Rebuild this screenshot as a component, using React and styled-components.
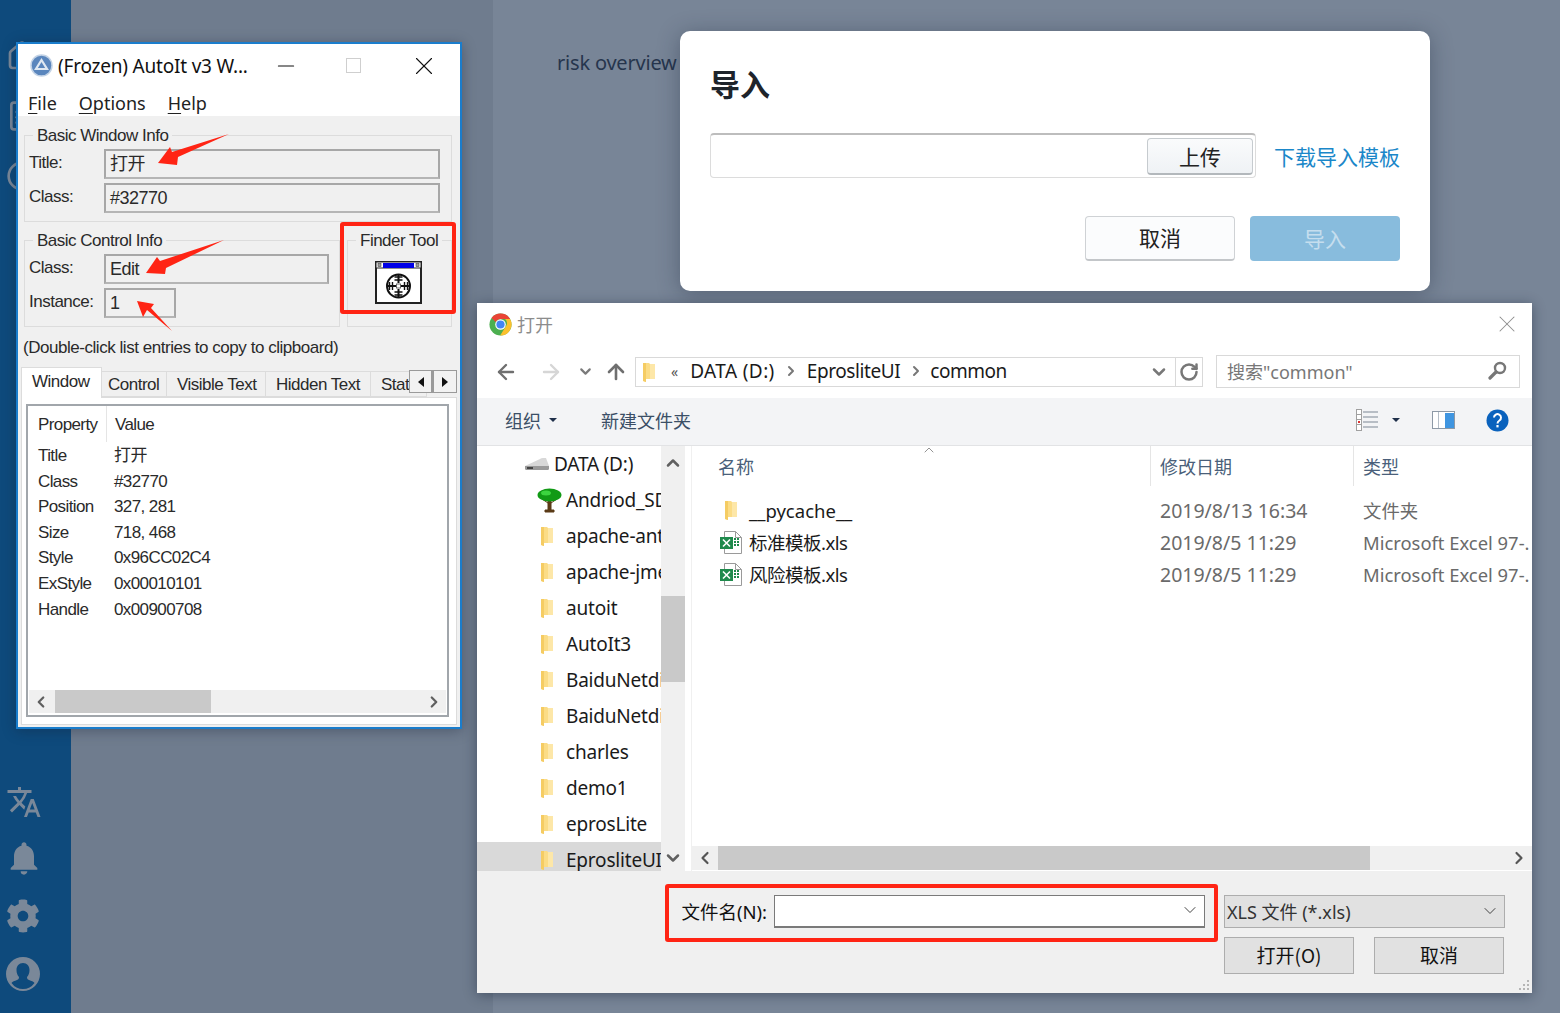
import React from 'react';
import styled, { createGlobalStyle } from 'styled-components';
import { ArrowLeft, ArrowRight, ArrowUp, ChevronDown, ChevronLeft, ChevronRight, ChevronUp, RotateCw, Home, FileText, Circle, Minus, X } from 'lucide-react';
import { MdTranslate, MdNotifications } from 'react-icons/md';
import { FaCog } from 'react-icons/fa';

const GlobalStyle = createGlobalStyle`
  html, body { margin: 0; padding: 0; }
  body { width: 1560px; height: 1013px; overflow: hidden; }
  * { box-sizing: border-box; }
  svg { flex-shrink: 0; }
`;

const winFont = `"Liberation Sans", "Noto Sans CJK SC", sans-serif`;
const uiFont = `"Noto Sans", "Noto Sans CJK SC", sans-serif`;

const Desktop = styled.div`
  position: relative;
  display: flex;
  width: 1560px;
  height: 1013px;
  overflow: hidden;
  font-family: ${uiFont};
`;

const Sidebar = styled.aside`
  width: 71px;
  flex-shrink: 0;
  background: #0e4a7c;
  color: #7a8899;
  display: flex;
  flex-direction: column;
  justify-content: space-between;
  padding: 40px 0 22px 6px;
`;

const SideGroup = styled.div`
  display: flex;
  flex-direction: column;
  gap: ${(p) => p.$gap}px;
`;

const SideIcon = styled.span`
  display: flex;
  margin-bottom: ${(p) => p.$mb}px;
  margin-left: ${(p) => p.$ml || 0}px;
`;

const Main = styled.main`
  flex: 1;
  background: linear-gradient(90deg, #6f7c8e 0, #6f7c8e 422px, #788597 422px);
  padding: 49px 0 0 486px;
`;

const PageTitle = styled.div`
  font-size: 20px;
  line-height: 28px;
  color: #26354d;
  font-family: ${uiFont};
  letter-spacing: -0.2px;
`;

/* ---- AutoIt window ---- */
const AutoWindow = styled.section`
  position: absolute;
  left: 16px;
  top: 42px;
  width: 446px;
  height: 687px;
  background: #f0f0f0;
  border: 2px solid #1a7dcc;
  box-shadow: 0 2px 12px rgba(20, 30, 50, 0.35);
  font-family: ${winFont};
  font-size: 17px;
  letter-spacing: -0.5px;
  color: #2a2a2a;
  display: flex;
  flex-direction: column;
`;

const AutoTitleBar = styled.div`
  height: 43px;
  flex-shrink: 0;
  background: #fff;
  display: flex;
  align-items: center;
  padding-left: 12px;
  font-family: ${uiFont};
  font-size: 19px;
  letter-spacing: -0.2px;
  color: #111;
`;

const AutoTitleText = styled.span`
  margin-left: 5px;
  width: 196px;
  white-space: nowrap;
`;

const CaptionButton = styled.span`
  width: ${(p) => p.$w}px;
  display: flex;
  justify-content: center;
  color: ${(p) => p.$color};
`;

const AutoMenu = styled.div`
  height: 29px;
  flex-shrink: 0;
  background: #fff;
  display: flex;
  gap: 22px;
  padding: 3px 0 0 10px;
  font-family: ${uiFont};
  font-size: 18px;
  letter-spacing: 0;
  line-height: 26px;
  color: #222;
`;

const MenuKey = styled.span`
  text-decoration: underline;
  text-underline-offset: 3px;
`;

const AutoBody = styled.div`
  flex: 1;
  display: flex;
  flex-direction: column;
  padding: 9px 3px 0;
`;

const GroupBox = styled.fieldset`
  margin: 0;
  padding: 4px 0 8px 0;
  border: 1px solid #dcdcdc;
  min-width: 0;
  display: flex;
  flex-direction: column;
  gap: 4px;
  flex: ${(p) => p.$flex || 'none'};
`;

const GroupLegend = styled.legend`
  margin-left: 8px;
  padding: 1px 4px 0;
  height: 20px;
  line-height: 20px;
`;

const GroupsColumn = styled.div`
  display: flex;
  flex-direction: column;
  gap: 8px;
  margin: 0 5px 0 3px;
`;

const GroupsRow = styled.div`
  display: flex;
  gap: 7px;
`;

const FieldRow = styled.div`
  display: flex;
  align-items: center;
  height: 30px;
  padding-left: 4px;
`;

const FieldLabel = styled.span`
  width: 75px;
  margin-top: -2px;
`;

const Field = styled.div`
  width: ${(p) => p.$w}px;
  height: 30px;
  border: 2px solid #a7a7a7;
  border-bottom-color: #b5b5b5;
  padding-left: 4px;
  line-height: 27px;
  font-size: 18px;
  background: #f0f0f0;
`;

const FinderBody = styled.div`
  height: 64px;
  display: flex;
  justify-content: center;
  align-items: flex-start;
  padding: 7px 2px 0 0;
`;

const HelpCaption = styled.div`
  height: 20px;
  line-height: 22px;
  margin: 10px 0 10px 2px;
  letter-spacing: -0.46px;
  white-space: nowrap;
`;

const TabStrip = styled.div`
  position: relative;
  height: 30px;
  flex-shrink: 0;
  display: flex;
  align-items: flex-end;
  z-index: 1;
`;

const Tab = styled.div`
  width: ${(p) => p.$w}px;
  height: ${(p) => (p.$active ? 31 : 26)}px;
  margin-bottom: ${(p) => (p.$active ? -1 : 0)}px;
  background: ${(p) => (p.$active ? '#fff' : '#f0f0f0')};
  border: 1px solid #dcdcdc;
  border-left-width: ${(p) => (p.$active ? 1 : 0)}px;
  border-bottom-width: ${(p) => (p.$active ? 0 : 1)}px;
  padding: ${(p) => (p.$active ? '3px 0 0 10px' : `2px 0 0 ${p.$pl}px`)};
  line-height: 22px;
  overflow: hidden;
  white-space: nowrap;
`;

const Spinner = styled.div`
  position: absolute;
  right: 0;
  top: 3px;
  display: flex;
`;

const SpinButton = styled.div`
  width: 24px;
  height: 23px;
  background: #f2f2f2;
  border: 1px solid #9a9a9a;
  display: flex;
  align-items: center;
  justify-content: center;
  &:first-child { border-right-width: 2px; }
`;

const TabPanel = styled.div`
  width: 436px;
  height: 328px;
  flex-shrink: 0;
  background: #fff;
  border: 1px solid #dcdcdc;
  padding: 6px 7px 7px 4px;
`;

const ListBox = styled.div`
  height: 100%;
  border: 2px solid #a1a6ab;
  display: flex;
  flex-direction: column;
  letter-spacing: -0.6px;
`;

const ListHead = styled.div`
  display: grid;
  grid-template-columns: 77px 1fr;
  height: 37px;
  line-height: 37px;
  padding-left: 10px;
  flex-shrink: 0;
`;

const HeadCell = styled.div`
  height: 36px;
  ${(p) => p.$split && 'border-right: 1px solid #e5e5e5; margin-right: 8px;'}
`;

const ListRows = styled.div`
  flex: 1;
`;

const PropRow = styled.div`
  display: grid;
  grid-template-columns: 76px 1fr;
  height: 25.6px;
  line-height: 26.5px;
  padding-left: 10px;
`;

const ListScroll = styled.div`
  height: 23px;
  margin: 0 1px 2px;
  background: #f0f0f0;
  display: flex;
  align-items: center;
  justify-content: space-between;
  position: relative;
  color: #606060;
  padding: 0 3px;
`;

const ListThumb = styled.div`
  position: absolute;
  left: 26px;
  top: 0;
  width: 156px;
  height: 100%;
  background: #c9c9c9;
`;

/* ---- web modal ---- */
const Modal = styled.section`
  position: absolute;
  left: 680px;
  top: 31px;
  width: 750px;
  height: 260px;
  background: #fff;
  border-radius: 10px;
  padding: 34px 30px 0;
  box-shadow: 0 3px 22px rgba(30, 40, 60, 0.38);
  display: flex;
  flex-direction: column;
  font-family: "Noto Sans CJK SC", sans-serif;
`;

const ModalTitle = styled.h2`
  margin: 0 0 32px;
  font-size: 30px;
  line-height: 36px;
  font-weight: 700;
  color: #1e242b;
`;

const UploadRow = styled.div`
  display: flex;
  align-items: center;
  gap: 18px;
`;

const UploadInput = styled.div`
  width: 546px;
  height: 45px;
  border: 1px solid #dcdcdc;
  border-top: 2px solid #bdbdbd;
  border-radius: 4px;
  display: flex;
  justify-content: flex-end;
  align-items: center;
  padding-right: 2px;
`;

const UploadButton = styled.button`
  width: 106px;
  height: 37px;
  border: 1px solid #c6cbcf;
  border-bottom: 2px solid #b3b8bc;
  border-radius: 4px;
  background: linear-gradient(#fafbfc, #eff2f5);
  font: 21px "Noto Sans CJK SC", sans-serif;
  color: #222;
  padding: 0;
`;

const TemplateLink = styled.a`
  font-size: 21px;
  color: #1b87c9;
  white-space: nowrap;
`;

const ModalActions = styled.div`
  display: flex;
  justify-content: flex-end;
  gap: 15px;
  margin-top: 38px;
`;

const ModalButton = styled.button`
  width: 150px;
  height: 45px;
  border-radius: 4px;
  padding: 0 0 2px;
  font: 21px "Noto Sans CJK SC", sans-serif;
  border: ${(p) => (p.$primary ? 'none' : '1px solid #cfd2d5')};
  border-bottom: ${(p) => (p.$primary ? 'none' : '2px solid #c3c6c9')};
  background: ${(p) => (p.$primary ? '#88bcdd' : '#fbfcfd')};
  color: ${(p) => (p.$primary ? '#c5deee' : '#222')};
`;

/* ---- file dialog ---- */
const FileDialog = styled.section`
  position: absolute;
  left: 477px;
  top: 303px;
  width: 1055px;
  height: 690px;
  background: #fff;
  box-shadow: 0 2px 12px rgba(20, 30, 50, 0.45);
  display: flex;
  flex-direction: column;
  color: #1a1a1a;
`;

const DialogTitle = styled.div`
  height: 42px;
  flex-shrink: 0;
  display: flex;
  align-items: center;
  padding: 0 11px 0 12px;
  gap: 5px;
  color: #8c8c8c;
  font-size: 18px;
`;

const DialogClose = styled.span`
  margin-left: auto;
  display: flex;
  color: #8e8e8e;
`;

const AddressRow = styled.div`
  height: 53px;
  flex-shrink: 0;
  display: flex;
  align-items: center;
  padding: 0 12px 0 17px;
`;

const NavIcon = styled.span`
  display: flex;
  width: ${(p) => p.$w}px;
  color: ${(p) => p.$color};
`;

const AddressBox = styled.div`
  width: 568px;
  height: 30px;
  margin-top: 1px;
  border: 1px solid #d9d9d9;
  display: flex;
  align-items: center;
  padding-left: 6px;
  font-size: 19px;
  white-space: nowrap;
`;

const Crumb = styled.span`
  margin-left: ${(p) => p.$ml}px;
  color: ${(p) => p.$color || '#1a1a1a'};
  font-size: ${(p) => p.$size || 19}px;
  letter-spacing: ${(p) => p.$ls || 0}px;
  padding-bottom: 2px;
  display: flex;
  align-items: center;
`;

const AddressEnd = styled.span`
  margin-left: auto;
  display: flex;
  align-items: center;
  height: 100%;
  color: #777;
`;

const RefreshCell = styled.span`
  width: 27px;
  height: 100%;
  border-left: 1px solid #d9d9d9;
  margin-left: 6px;
  display: flex;
  align-items: center;
  justify-content: center;
`;

const SearchBox = styled.div`
  width: 304px;
  height: 33px;
  margin-left: 13px;
  border: 1px solid #d9d9d9;
  display: flex;
  align-items: center;
  justify-content: space-between;
  padding: 0 12px 2px 10px;
  font-size: 18px;
  color: #777;
`;

const Toolbar = styled.div`
  height: 48px;
  flex-shrink: 0;
  background: #f3f4f6;
  border-bottom: 1px solid #e2e3e5;
  display: flex;
  align-items: center;
  padding: 0 0 3px 28px;
  font-size: 18px;
  color: #3b4f66;
`;

const ToolItem = styled.span`
  display: flex;
  align-items: center;
  flex-shrink: 0;
  gap: 8px;
  white-space: nowrap;
  margin-right: ${(p) => p.$mr || 0}px;
  margin-left: ${(p) => p.$ml || 0}px;
`;

const Caret = styled.span`
  width: 0;
  height: 0;
  border: 4px solid transparent;
  border-top: 4px solid #1f2f4a;
  border-bottom: 0;
`;

const Explorer = styled.div`
  height: 425px;
  flex-shrink: 0;
  display: flex;
  position: relative;
`;

const TreePane = styled.div`
  width: 184px;
  overflow: hidden;
  flex-shrink: 0;
`;

const TreeRow = styled.div`
  height: 36px;
  display: flex;
  align-items: center;
  padding: 0 0 0 ${(p) => p.$indent}px;
  gap: ${(p) => p.$gap}px;
  font-size: 19px;
  letter-spacing: -0.2px;
  white-space: nowrap;
  background: ${(p) => (p.$selected ? '#d9d9d9' : 'transparent')};
`;

const VScroll = styled.div`
  width: 24px;
  flex-shrink: 0;
  background: #f0f0f0;
  display: flex;
  flex-direction: column;
  justify-content: space-between;
  align-items: center;
  position: relative;
  padding: 7px 0 3px;
  color: #606060;
`;

const VThumb = styled.div`
  position: absolute;
  left: 0;
  top: 150px;
  width: 100%;
  height: 86px;
  background: #c9c9c9;
`;

const FilePane = styled.div`
  flex: 1;
  margin-left: 6px;
  border-left: 1px solid #f0f0f0;
  display: flex;
  flex-direction: column;
  min-width: 0;
  position: relative;
`;

const FileHead = styled.div`
  display: grid;
  grid-template-columns: 458px 203px 1fr;
  height: 49px;
  flex-shrink: 0;
  font-size: 18px;
  color: #4a5f7a;
`;

const HeadCol = styled.div`
  height: 40px;
  display: flex;
  align-items: center;
  padding-left: ${(p) => p.$pl}px;
  position: relative;
  ${(p) => p.$split && 'border-left: 1px solid #e5e5e5;'}
`;

const SortMark = styled.span`
  position: absolute;
  left: 229px;
  top: -4px;
  display: flex;
  color: #777;
`;

const FileRows = styled.div`
  flex: 1;
`;

const FileRow = styled.div`
  display: grid;
  grid-template-columns: 458px 203px 1fr;
  height: 32px;
  align-items: center;
  padding-bottom: 2px;
  white-space: nowrap;
  overflow: hidden;
`;

const FileName = styled.div`
  display: flex;
  align-items: center;
  gap: 7px;
  padding-left: 28px;
  font-size: 18.5px;
  letter-spacing: ${(p) => p.$ls}px;
`;

const FileIconBox = styled.span`
  width: 22px;
  display: flex;
  justify-content: center;
`;

const FileMeta = styled.div`
  color: #6a6a6a;
  padding-left: 10px;
  font-size: ${(p) => p.$size}px;
  overflow: hidden;
`;

const HScroll = styled.div`
  height: 24px;
  margin-bottom: 1px;
  background: #f0f0f0;
  display: flex;
  align-items: center;
  justify-content: space-between;
  position: relative;
  padding: 0 3px;
  color: #555;
`;

const HThumb = styled.div`
  position: absolute;
  left: 26px;
  top: 0;
  width: 652px;
  height: 100%;
  background: #c9c9c9;
`;

const DialogFooter = styled.div`
  flex: 1;
  background: #f0f0f0;
  padding: 24px 27px 0 0;
  display: flex;
  flex-direction: column;
  align-items: flex-end;
  gap: 9px;
  position: relative;
`;

const FooterRow = styled.div`
  display: flex;
  align-items: center;
  gap: ${(p) => p.$gap}px;
  margin-right: ${(p) => p.$mr || 0}px;
  color: #111;
  font-size: 18px;
`;

const FileNameLabel = styled.span`
  margin-right: -12px;
  font-size: 18.5px;
  padding-bottom: 2px;
`;

const Combo = styled.div`
  width: ${(p) => p.$w}px;
  height: 33px;
  display: flex;
  align-items: center;
  justify-content: space-between;
  padding: 0 4px 2px 2px;
  background: ${(p) => (p.$filled ? '#e1e1e1' : '#fff')};
  border: 1px solid ${(p) => (p.$filled ? '#adadad' : '#7a7a7a')};
  border-width: ${(p) => (p.$filled ? '1px' : '1px 1px 2px 1px')};
  color: #333;
`;

const DialogButton = styled.button`
  width: 130px;
  height: 37px;
  padding: 0 0 2px;
  border: 1px solid #adadad;
  background: #e1e1e1;
  font: 19px "Noto Sans CJK SC", sans-serif;
  color: #111;
`;

const Grip = styled.svg`
  position: absolute;
  right: 2px;
  bottom: 2px;
`;

/* ---- annotations ---- */
const RedBox = styled.div`
  position: absolute;
  left: ${(p) => p.$x}px;
  top: ${(p) => p.$y}px;
  width: ${(p) => p.$w}px;
  height: ${(p) => p.$h}px;
  border: 4px solid #ff2414;
  border-radius: 3px;
  pointer-events: none;
`;

const ArrowLayer = styled.svg`
  position: absolute;
  left: 0;
  top: 0;
  pointer-events: none;
`;

const FolderIcon = () => (
  <svg width="15" height="21" viewBox="0 0 15 21">
    <path d="M1 1h6l1 1h5v15H4v3l-3-1z" fill="#fbdc86" />
    <path d="M8 2h5v15H8z" fill="#fde7a8" />
    <path d="M1 1h3v19l-3-1z" fill="#f5cc63" />
  </svg>
);

const TreeIcon = () => (
  <svg width="25" height="25" viewBox="0 0 25 25">
    <path d="M11 13h3v9h3v2H8v-2h3z M5 11l6 4M20 11l-6 4" fill="#5b3a16" stroke="#5b3a16" />
    <ellipse cx="12.5" cy="7" rx="12" ry="6.5" fill="#119a15" />
    <ellipse cx="9" cy="5" rx="5" ry="2.5" fill="#3cd43f" />
  </svg>
);

const DriveIcon = () => (
  <svg width="24" height="14" viewBox="0 0 24 14">
    <path d="M0 9L15 2q1-1 3-1h3l3 8v3l-1 1H1l-1-1z" fill="#d8d8d8" />
    <path d="M0 9h24v3l-1 1H1l-1-1z" fill="#9a9a9a" />
    <path d="M2 10h6v2H2z" fill="#444" />
  </svg>
);

const ExcelIcon = () => (
  <svg width="22" height="23" viewBox="0 0 22 23">
    <path d="M4.5.5h11l6 6v16h-17z" fill="#fff" stroke="#9a9a9a" />
    <path d="M15.5.5v6h6" fill="none" stroke="#9a9a9a" />
    <path d="M0 6h13v12H0z" fill="#1f8a4c" />
    <path d="M3 8.5l7 7M10 8.5l-7 7" stroke="#fff" strokeWidth="1.6" />
    <path d="M14 8h6M14 11h6M14 14h6" stroke="#1f8a4c" strokeWidth="2" strokeDasharray="2 1" />
  </svg>
);

const ChromeIcon = () => (
  <svg width="23" height="23" viewBox="0 0 24 24">
    <circle cx="12" cy="12" r="11.5" fill="#4caf50" />
    <path d="M12 .5A11.5 11.5 0 0 1 22 6.3H12a5.8 5.8 0 0 0-5 3L2.6 5.2A11.5 11.5 0 0 1 12 .5z" fill="#ea4335" />
    <path d="M22 6.3a11.5 11.5 0 0 1-10.4 17.2L17 14.9a5.8 5.8 0 0 0-.2-8.6z" fill="#fbc02d" />
    <circle cx="12" cy="12" r="5.5" fill="#fff" />
    <circle cx="12" cy="12" r="4.3" fill="#4285f4" />
  </svg>
);

const AutoItIcon = () => (
  <svg width="23" height="23" viewBox="0 0 23 23">
    <circle cx="11.5" cy="11.5" r="10.5" fill="#5a86bd" stroke="#c3d3e6" strokeWidth="1.5" />
    <path d="M11.5 6l5.5 9H6z" fill="none" stroke="#dfe8f2" strokeWidth="2.2" />
  </svg>
);

const FinderIcon = () => (
  <svg width="47" height="43" viewBox="0 0 47 43">
    <rect x="1" y="1" width="45" height="41" fill="#fff" stroke="#222" strokeWidth="2" />
    <rect x="1" y="1" width="45" height="6" fill="#fff" stroke="#222" strokeWidth="1" />
    <rect x="3" y="2.5" width="3" height="3" fill="#999" stroke="#444" strokeWidth=".6" />
    <rect x="41" y="2.5" width="3" height="3" fill="#999" stroke="#444" strokeWidth=".6" />
    <rect x="8" y="2" width="31" height="5" fill="#0000e6" />
    <circle cx="23.5" cy="25" r="11.5" fill="none" stroke="#111" strokeWidth="2" />
    <path d="M23.5 13v9M23.5 28v9M12 25h9M26 25h9" stroke="#111" strokeWidth="2" />
    <path d="M19.5 16h8M19.5 19h8M19.5 31h8M19.5 34h8M14.5 21v8M17.5 21v8M29.5 21v8M32.5 21v8" stroke="#111" strokeWidth="1.4" />
    <rect x="21.5" y="23" width="4" height="4" fill="#fff" stroke="#666" />
  </svg>
);

const MaxIcon = () => (
  <svg width="15" height="15" viewBox="0 0 15 15">
    <rect x=".5" y=".5" width="14" height="14" fill="none" stroke="#cfcfcf" />
  </svg>
);

const MirrorSearch = () => (
  <svg width="19" height="19" viewBox="0 0 19 19">
    <circle cx="12" cy="7" r="5" fill="none" stroke="#777" strokeWidth="2.4" />
    <path d="M8 11l-6 6" stroke="#777" strokeWidth="3.2" strokeLinecap="round" />
  </svg>
);

const ViewIcon = () => (
  <svg width="22" height="22" viewBox="0 0 22 22">
    <rect x=".5" y=".5" width="5" height="21" fill="#fff" stroke="#a0a0a0" />
    <path d="M1 5.5h4M1 10.5h4M1 15.5h4" stroke="#a0a0a0" />
    <path d="M7 3h15M7 8h15M7 13h15M7 18h15" stroke="#7d8794" />
    <rect x="2" y="12" width="2" height="2" fill="#d33" />
  </svg>
);

const PaneIcon = () => (
  <svg width="23" height="18" viewBox="0 0 23 18">
    <rect x=".5" y=".5" width="22" height="17" fill="#fff" stroke="#8d99a6" />
    <rect x="13" y="2" width="9" height="15" fill="#3f95e0" />
    <path d="M6.5 1v16" stroke="#b5bec8" />
  </svg>
);

const HelpIcon = () => (
  <svg width="23" height="23" viewBox="0 0 23 23">
    <circle cx="11.5" cy="11.5" r="11" fill="#0a62bd" />
    <path d="M8 8.5a3.5 3.5 0 1 1 5.4 3c-1.2.8-1.9 1.4-1.9 3" fill="none" stroke="#fff" strokeWidth="2" />
    <rect x="10.4" y="16" width="2.2" height="2.4" fill="#fff" />
  </svg>
);

const UserIcon = () => (
  <svg width="34" height="34" viewBox="0 0 34 34">
    <path fillRule="evenodd" d="M17 0a17 17 0 1 1 0 34a17 17 0 0 1 0-34zM17 6c-4 0-6.5 3-6.5 7 0 3 1 5.5 2.5 7 0 1.5-.5 2.5-2 3-2.5 1-4.5 1.5-5.500 3a14 14 0 0 0 23 0c-1-1.5-3-2-5.5-3-1.5-.5-2-1.5-2-3 1.500-1.5 2.5-4 2.5-7 0-4-2.5-7-6.5-7z" fill="currentColor" />
  </svg>
);

const SpinLeft = () => (
  <svg width="6" height="10" viewBox="0 0 6 10"><path d="M6 0v10L0 5z" fill="#111" /></svg>
);
const SpinRight = () => (
  <svg width="6" height="10" viewBox="0 0 6 10"><path d="M0 0v10l6-5z" fill="#111" /></svg>
);

const tabs = [
  { label: 'Control', w: 65, pl: 6 },
  { label: 'Visible Text', w: 99, pl: 10 },
  { label: 'Hidden Text', w: 105, pl: 10 },
  { label: 'Stat', w: 56, pl: 10 },
];

const props = [
  ['Title', '打开'],
  ['Class', '#32770'],
  ['Position', '327, 281'],
  ['Size', '718, 468'],
  ['Style', '0x96CC02C4'],
  ['ExStyle', '0x00010101'],
  ['Handle', '0x00900708'],
];

const folders = ['apache-ant', 'apache-jmeter', 'autoit', 'AutoIt3', 'BaiduNetdisk', 'BaiduNetdisk', 'charles', 'demo1', 'eprosLite', 'EprosliteUI'];

const files = [
  { name: '__pycache__', date: '2019/8/13 16:34', type: '文件夹', folder: true },
  { name: '标准模板.xls', date: '2019/8/5 11:29', type: 'Microsoft Excel 97-.' },
  { name: '风险模板.xls', date: '2019/8/5 11:29', type: 'Microsoft Excel 97-.' },
];

const arrows = [
  '158,163 170,147 172,152 229,134 178,157 177,165',
  '146,273 157,257 160,261 224,240 166,268 165,274',
  '137,301 154,304 151,308 172,331 147,310 143,317',
];

const App = () => (
  <Desktop>
    <GlobalStyle />
    <Sidebar>
      <SideGroup $gap={28}>
        <Home size={32} />
        <FileText size={32} />
        <Circle size={32} />
      </SideGroup>
      <SideGroup $gap={0}>
        <SideIcon $mb={18}><MdTranslate size={36} /></SideIcon>
        <SideIcon $mb={21} $ml={-2}><MdNotifications size={40} /></SideIcon>
        <SideIcon $mb={24}><FaCog size={34} /></SideIcon>
        <SideIcon $mb={0}><UserIcon /></SideIcon>
      </SideGroup>
    </Sidebar>
    <Main>
      <PageTitle>risk overview</PageTitle>
    </Main>

    <AutoWindow>
      <AutoTitleBar>
        <AutoItIcon />
        <AutoTitleText>(Frozen) AutoIt v3 W...</AutoTitleText>
        <CaptionButton $w={69} $color="#111"><Minus size={26} strokeWidth={1} /></CaptionButton>
        <CaptionButton $w={69}><MaxIcon /></CaptionButton>
        <CaptionButton $w={73} $color="#111"><X size={30} strokeWidth={0.9} /></CaptionButton>
      </AutoTitleBar>
      <AutoMenu>
        <span><MenuKey>F</MenuKey>ile</span>
        <span><MenuKey>O</MenuKey>ptions</span>
        <span><MenuKey>H</MenuKey>elp</span>
      </AutoMenu>
      <AutoBody>
        <GroupsColumn>
          <GroupBox>
            <GroupLegend>Basic Window Info</GroupLegend>
            <FieldRow><FieldLabel>Title:</FieldLabel><Field $w={336}>打开</Field></FieldRow>
            <FieldRow><FieldLabel>Class:</FieldLabel><Field $w={336}>#32770</Field></FieldRow>
          </GroupBox>
          <GroupsRow>
            <GroupBox $flex="0 0 316px">
              <GroupLegend>Basic Control Info</GroupLegend>
              <FieldRow><FieldLabel>Class:</FieldLabel><Field $w={225}>Edit</Field></FieldRow>
              <FieldRow><FieldLabel>Instance:</FieldLabel><Field $w={72}>1</Field></FieldRow>
            </GroupBox>
            <GroupBox $flex="1">
              <GroupLegend>Finder Tool</GroupLegend>
              <FinderBody><FinderIcon /></FinderBody>
            </GroupBox>
          </GroupsRow>
        </GroupsColumn>
        <HelpCaption>(Double-click list entries to copy to clipboard)</HelpCaption>
        <TabStrip>
          <Tab $active $w={81}>Window</Tab>
          {tabs.map((t) => <Tab key={t.label} $w={t.w} $pl={t.pl}>{t.label}</Tab>)}
          <Spinner>
            <SpinButton><SpinLeft /></SpinButton>
            <SpinButton><SpinRight /></SpinButton>
          </Spinner>
        </TabStrip>
        <TabPanel>
          <ListBox>
            <ListHead>
              <HeadCell $split>Property</HeadCell>
              <HeadCell>Value</HeadCell>
            </ListHead>
            <ListRows>
              {props.map(([k, v]) => (
                <PropRow key={k}><span>{k}</span><span>{v}</span></PropRow>
              ))}
            </ListRows>
            <ListScroll>
              <ListThumb />
              <ChevronLeft size={18} strokeWidth={3} />
              <ChevronRight size={18} strokeWidth={3} />
            </ListScroll>
          </ListBox>
        </TabPanel>
      </AutoBody>
    </AutoWindow>

    <Modal>
      <ModalTitle>导入</ModalTitle>
      <UploadRow>
        <UploadInput><UploadButton>上传</UploadButton></UploadInput>
        <TemplateLink>下载导入模板</TemplateLink>
      </UploadRow>
      <ModalActions>
        <ModalButton>取消</ModalButton>
        <ModalButton $primary>导入</ModalButton>
      </ModalActions>
    </Modal>

    <FileDialog>
      <DialogTitle>
        <ChromeIcon />
        打开
        <DialogClose><X size={28} strokeWidth={0.9} /></DialogClose>
      </DialogTitle>
      <AddressRow>
        <NavIcon $w={45} $color="#6f6f6f"><ArrowLeft size={24} strokeWidth={2.4} /></NavIcon>
        <NavIcon $w={38} $color="#d6d6d6"><ArrowRight size={24} strokeWidth={2.4} /></NavIcon>
        <NavIcon $w={27} $color="#7a7a7a"><ChevronDown size={17} strokeWidth={3} /></NavIcon>
        <NavIcon $w={31} $color="#6f6f6f"><ArrowUp size={24} strokeWidth={2.6} /></NavIcon>
        <AddressBox>
          <FolderIcon />
          <Crumb $ml={14} $color="#555" $size={14}>«</Crumb>
          <Crumb $ml={12} $ls={0.4}>DATA (D:)</Crumb>
          <Crumb $ml={8} $color="#777"><ChevronRight size={16} strokeWidth={3} /></Crumb>
          <Crumb $ml={8} $ls={-0.4}>EprosliteUI</Crumb>
          <Crumb $ml={8} $color="#777"><ChevronRight size={16} strokeWidth={3} /></Crumb>
          <Crumb $ml={6} $ls={-0.5}>common</Crumb>
          <AddressEnd>
            <ChevronDown size={20} strokeWidth={3} />
            <RefreshCell><RotateCw size={20} strokeWidth={3} /></RefreshCell>
          </AddressEnd>
        </AddressBox>
        <SearchBox>
          搜索"common"
          <MirrorSearch />
        </SearchBox>
      </AddressRow>
      <Toolbar>
        <ToolItem $mr={44}>组织<Caret /></ToolItem>
        <ToolItem>新建文件夹</ToolItem>
        <ToolItem $ml={665}><ViewIcon /></ToolItem>
        <ToolItem $ml={14}><Caret /></ToolItem>
        <ToolItem $ml={32}><PaneIcon /></ToolItem>
        <ToolItem $ml={31}><HelpIcon /></ToolItem>
      </Toolbar>
      <Explorer>
        <TreePane>
          <TreeRow $indent={48} $gap={5}><DriveIcon />DATA (D:)</TreeRow>
          <TreeRow $indent={60} $gap={4}><TreeIcon />Andriod_SDK</TreeRow>
          {folders.map((f, i) => (
            <TreeRow key={f + i} $indent={63} $gap={11} $selected={f === 'EprosliteUI'}>
              <FolderIcon />{f}
            </TreeRow>
          ))}
        </TreePane>
        <VScroll>
          <VThumb />
          <ChevronUp size={20} strokeWidth={3} />
          <ChevronDown size={20} strokeWidth={3} />
        </VScroll>
        <FilePane>
          <FileHead>
            <HeadCol $pl={26}>名称<SortMark><ChevronUp size={16} strokeWidth={1.2} /></SortMark></HeadCol>
            <HeadCol $pl={9} $split>修改日期</HeadCol>
            <HeadCol $pl={9} $split>类型</HeadCol>
          </FileHead>
          <FileRows>
            {files.map((f) => (
              <FileRow key={f.name}>
                <FileName $ls={f.folder ? 0 : -0.5}>
                  <FileIconBox>{f.folder ? <FolderIcon /> : <ExcelIcon />}</FileIconBox>
                  {f.name}
                </FileName>
                <FileMeta $size={19.5}>{f.date}</FileMeta>
                <FileMeta $size={18.4}>{f.type}</FileMeta>
              </FileRow>
            ))}
          </FileRows>
          <HScroll>
            <HThumb />
            <ChevronLeft size={20} strokeWidth={2.6} />
            <ChevronRight size={20} strokeWidth={2.6} />
          </HScroll>
        </FilePane>
      </Explorer>
      <DialogFooter>
        <FooterRow $gap={19}>
          <FileNameLabel>文件名(N):</FileNameLabel>
          <Combo $w={431}><span /><ChevronDown size={20} strokeWidth={1.1} /></Combo>
          <Combo $w={281} $filled>XLS 文件 (*.xls)<ChevronDown size={20} strokeWidth={1.1} /></Combo>
        </FooterRow>
        <FooterRow $gap={20} $mr={1}>
          <DialogButton>打开(O)</DialogButton>
          <DialogButton>取消</DialogButton>
        </FooterRow>
        <Grip width="12" height="11" viewBox="0 0 12 11">
          <path d="M9 0h2v2H9zM5 4h2v2H5zM9 4h2v2H9zM1 8h2v2H1zM5 8h2v2H5zM9 8h2v2H9z" fill="#b5b5b5" />
        </Grip>
      </DialogFooter>
    </FileDialog>

    <RedBox $x={340} $y={222} $w={116} $h={92} />
    <RedBox $x={665} $y={884} $w={553} $h={58} />
    <ArrowLayer width="1560" height="1013">
      {arrows.map((p) => <polygon key={p} points={p} fill="#ff2414" />)}
    </ArrowLayer>
  </Desktop>
);

export default App;
